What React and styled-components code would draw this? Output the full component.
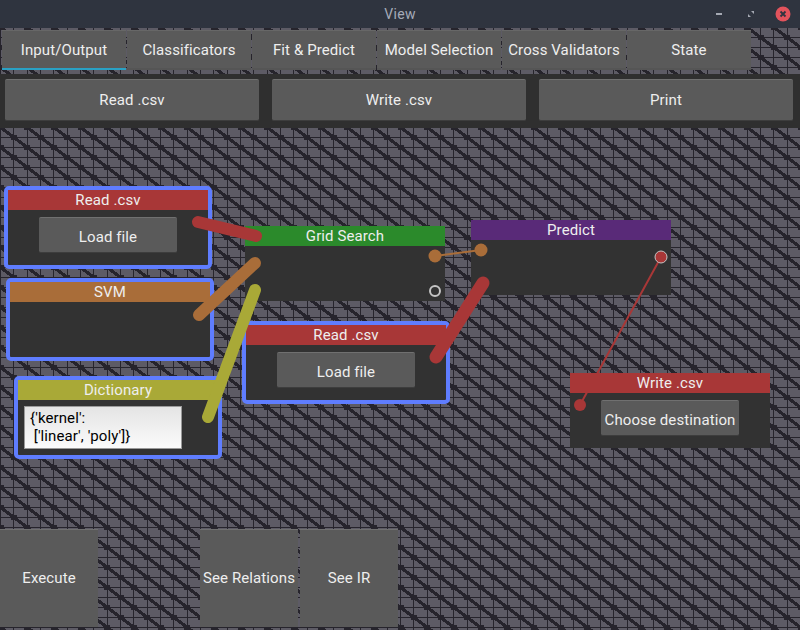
import React from "react";
import styled, { createGlobalStyle } from "styled-components";

const GlobalStyle = createGlobalStyle`
  html, body {
    margin: 0;
    padding: 0;
    background: #2f2f2f;
  }
  * {
    box-sizing: border-box;
  }
`;

const RED = "#a83737";
const BROWN = "#a96d39";
const OLIVE = "#a9a937";
const DARK_LINE = "#26242c";

const Window = styled.div`
  position: relative;
  width: 800px;
  height: 630px;
  display: flex;
  flex-direction: column;
  overflow: hidden;
  font-family: Roboto, "Liberation Sans", sans-serif;
  font-size: 15px;
  letter-spacing: 0.1px;
  color: #eeeeee;
`;

const PatternLayer = styled.svg`
  position: absolute;
  top: 0;
  left: 0;
`;

const TitleBar = styled.div`
  position: relative;
  height: 28px;
  flex: none;
  display: flex;
  align-items: center;
  justify-content: center;
  background: #2f343f;
`;

const Title = styled.span`
  font-size: 14px;
  letter-spacing: 0.3px;
  color: #a5abb8;
`;

const WinControls = styled.svg`
  position: absolute;
  top: 0;
  right: 0;
`;

const Tabs = styled.div`
  position: relative;
  flex: none;
  display: grid;
  grid-template-columns: repeat(6, 124px);
  gap: 1px;
  padding: 2px 0 4px 2px;
`;

const Tab = styled.div`
  height: 40px;
  display: flex;
  align-items: center;
  justify-content: center;
  background: #5a5a5a;
  border-top: 1px solid #676767;
  border-bottom: 2px solid ${(p) => (p.$active ? "#2aa1c4" : "#555555")};
  white-space: nowrap;
`;

const ActionBar = styled.div`
  position: relative;
  height: 54px;
  flex: none;
  display: flex;
  gap: 13px;
  padding: 5px 7px 7px 5px;
  background: #2f2f2f;
`;

const ActionButton = styled.div`
  flex: 1;
  display: flex;
  align-items: center;
  justify-content: center;
  background: #5a5a5a;
  border-radius: 2px;
  border-top: 1px solid #707070;
  border-bottom: 1px solid #3d3d3d;
`;

const Canvas = styled.div`
  position: relative;
  flex: 1;
  display: flex;
  flex-direction: column;
  justify-content: flex-end;
  padding-bottom: 3px;
`;

const Node = styled.div`
  position: absolute;
  left: ${(p) => p.$x}px;
  top: ${(p) => p.$y}px;
  width: ${(p) => (p.$selected ? 208 : 200)}px;
  height: ${(p) => (p.$selected ? 83 : 75)}px;
  margin: ${(p) => (p.$selected ? "-4px" : "0")};
  display: flex;
  flex-direction: column;
  align-items: center;
  background: #323232;
  border: ${(p) => (p.$selected ? "4px solid #5f7dff" : "none")};
  border-radius: ${(p) => (p.$selected ? "5px" : "0")};
`;

const NodeHeader = styled.div`
  flex: none;
  width: 100%;
  height: 20px;
  line-height: 20px;
  text-align: center;
  background: ${(p) => p.$color};
  ${(p) => p.$aboveWires && "position: relative; z-index: 3;"}
`;

const NodeButton = styled.div`
  width: 138px;
  height: 36px;
  margin-top: 7px;
  padding-top: 3px;
  display: flex;
  align-items: center;
  justify-content: center;
  background: #5a5a5a;
  border-radius: 2px;
  border-top: 1px solid #707070;
  border-bottom: 1px solid #3d3d3d;
  white-space: nowrap;
`;

const DictBox = styled.pre`
  align-self: flex-start;
  width: 158px;
  height: 43px;
  margin: 6px 0 0 6px;
  padding: 2px 5px;
  font-family: inherit;
  font-size: 15px;
  line-height: 18px;
  color: #000000;
  background: linear-gradient(#e4e4e4, #fbfbfb);
  border: 1px solid #9a9a9a;
`;

const Wires = styled.svg`
  position: absolute;
  top: 0;
  left: 0;
  z-index: 2;
  pointer-events: none;
`;

const BottomBar = styled.div`
  position: relative;
  display: grid;
  grid-template-columns: repeat(4, 98px);
  gap: 2px;
`;

const BottomButton = styled.div`
  grid-column: ${(p) => p.$column};
  height: 98px;
  padding-bottom: 2px;
  display: flex;
  align-items: center;
  justify-content: center;
  background: #5a5a5a;
  border-top: 1px solid #707070;
  white-space: nowrap;
`;

const tabs = ["Input/Output", "Classificators", "Fit & Predict", "Model Selection", "Cross Validators", "State"];

// coordinates are relative to the canvas, which starts at y = 128
const wires = [
  { from: [198, 94], to: [256, 108], color: RED, width: 12 },
  { from: [199, 187], to: [255, 135], color: BROWN, width: 12 },
  { from: [208, 289], to: [255, 162], color: OLIVE, width: 12 },
  { from: [436, 229], to: [483, 155], color: RED, width: 13 },
  { from: [435, 128], to: [481, 122], color: BROWN, width: 2, dot: 6.5 },
  { from: [661, 129], to: [580, 277], color: RED, width: 2, dot: 6 },
];

function TilePattern() {
  const cellW = 80 / 6;
  const cellH = 10;
  const cells = [];
  for (let i = 0; i <= 6; i++) {
    for (let j = 0; j <= 2; j++) {
      const x = i * cellW;
      const y = j * cellH;
      if ((i + j) % 2 === 0) {
        cells.push(<rect key={`c${i}-${j}`} x={x - 2.5} y={y - 2} width="6" height="5" fill={DARK_LINE} />);
        cells.push(
          <line key={`d${i}-${j}`} x1={x} y1={y} x2={x + cellW} y2={y + cellH} stroke={DARK_LINE} strokeWidth="3.1" />
        );
      }
    }
  }
  return (
    <PatternLayer width="800" height="630">
      <defs>
        <pattern id="tile" patternUnits="userSpaceOnUse" width="80" height="20" patternTransform="translate(0 7)">
          <rect width="80" height="20" fill="#5d5b65" />
          <g shapeRendering="crispEdges" stroke={DARK_LINE} strokeWidth="1">
            {[0, 1, 2, 3, 4, 5].map((i) => (
              <line key={i} x1={Math.round(i * cellW) + 0.5} y1="0" x2={Math.round(i * cellW) + 0.5} y2="20" />
            ))}
            <line x1="0" y1="0.5" x2="80" y2="0.5" />
            <line x1="0" y1="10.5" x2="80" y2="10.5" />
          </g>
          <g shapeRendering="crispEdges">{cells}</g>
        </pattern>
      </defs>
      <rect width="800" height="630" fill="url(#tile)" />
    </PatternLayer>
  );
}

function WireLayer() {
  return (
    <Wires width="800" height="502">
      {wires.map((w, i) => (
        <g key={i}>
          <line
            x1={w.from[0]}
            y1={w.from[1]}
            x2={w.to[0]}
            y2={w.to[1]}
            stroke={w.color}
            strokeWidth={w.width}
            strokeLinecap="round"
          />
          {w.dot && <circle cx={w.from[0]} cy={w.from[1]} r={w.dot} fill={w.color} />}
          {w.dot && <circle cx={w.to[0]} cy={w.to[1]} r={w.dot} fill={w.color} />}
        </g>
      ))}
      <circle cx="435" cy="163" r="5" fill="none" stroke="#c4c4c4" strokeWidth="2" />
      <circle cx="661" cy="129" r="6" fill="none" stroke="#c4c4c4" strokeWidth="1" />
    </Wires>
  );
}

export default function App() {
  return (
    <>
      <GlobalStyle />
      <Window>
        <TilePattern />
        <TitleBar>
          <Title>View</Title>
          <WinControls width="100" height="28">
            <rect x="16" y="13" width="6" height="2" fill="#a5a9b3" />
            <path d="M51 11h3v3zM48 14l3 3h-3z" fill="#a5a9b3" />
            <circle cx="83" cy="14" r="7.5" fill="#e2535c" />
            <path d="M80.5 11.5l5 5M85.5 11.5l-5 5" stroke="#2f343f" strokeWidth="1.8" />
          </WinControls>
        </TitleBar>
        <Tabs>
          {tabs.map((t, i) => (
            <Tab key={t} $active={i === 0}>
              {t}
            </Tab>
          ))}
        </Tabs>
        <ActionBar>
          <ActionButton>Read .csv</ActionButton>
          <ActionButton>Write .csv</ActionButton>
          <ActionButton>Print</ActionButton>
        </ActionBar>
        <Canvas>
          <Node $x={8} $y={62} $selected>
            <NodeHeader $color={RED}>Read .csv</NodeHeader>
            <NodeButton>Load file</NodeButton>
          </Node>
          <Node $x={10} $y={154} $selected>
            <NodeHeader $color={BROWN}>SVM</NodeHeader>
          </Node>
          <Node $x={18} $y={252} $selected>
            <NodeHeader $color={OLIVE}>Dictionary</NodeHeader>
            <DictBox>{"{'kernel':\n ['linear', 'poly']}"}</DictBox>
          </Node>
          <Node $x={245} $y={98}>
            <NodeHeader $color="#2b8a2b">Grid Search</NodeHeader>
          </Node>
          <Node $x={246} $y={197} $selected>
            <NodeHeader $color={RED}>Read .csv</NodeHeader>
            <NodeButton>Load file</NodeButton>
          </Node>
          <Node $x={471} $y={92}>
            <NodeHeader $color="#592a78">Predict</NodeHeader>
          </Node>
          <Node $x={570} $y={245}>
            <NodeHeader $color={RED} $aboveWires>
              Write .csv
            </NodeHeader>
            <NodeButton>Choose destination</NodeButton>
          </Node>
          <WireLayer />
          <BottomBar>
            <BottomButton $column={1}>Execute</BottomButton>
            <BottomButton $column={3}>See Relations</BottomButton>
            <BottomButton $column={4}>See IR</BottomButton>
          </BottomBar>
        </Canvas>
      </Window>
    </>
  );
}
